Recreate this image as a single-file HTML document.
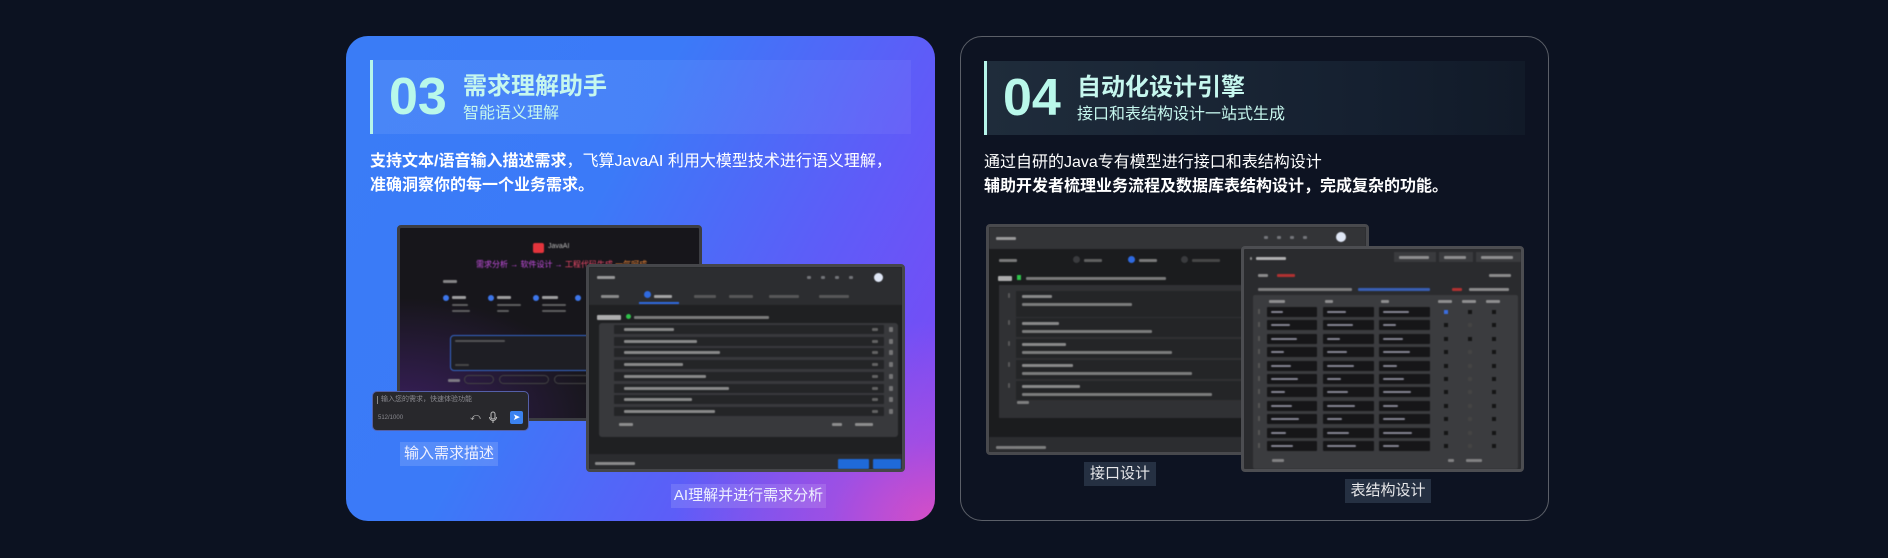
<!DOCTYPE html>
<html><head><meta charset="utf-8">
<style>
*{margin:0;padding:0;box-sizing:border-box}
html,body{width:1888px;height:558px;background:#0c1221;overflow:hidden;font-family:"Liberation Sans","Noto Sans CJK SC",sans-serif}
.abs{position:absolute}
.card{position:absolute;top:36px;width:589px;height:485px;border-radius:22px;overflow:hidden}
#c1{left:346px;background:radial-gradient(ellipse 260px 200px at 100% 100%,#d54ec6 0%,rgba(200,80,210,0.5) 40%,rgba(130,70,245,0) 100%),linear-gradient(118deg,#3a7cf6 0%,#3b7af8 40%,#5e5cf8 70%,#8145f5 100%)}
#c2{left:960px;background:#0d1322;border:1px solid #5b5f68}
.band{position:absolute;left:24px;top:24px;width:541px;height:74px;border-left:3px solid #b6f5ea}
#c1 .band{background:linear-gradient(90deg,rgba(255,255,255,0.08),rgba(255,255,255,0.05))}
#c2 .band{left:23px;background:linear-gradient(90deg,#1f2c3b,#152030 70%,#111a28)}
.num{position:absolute;left:16px;top:6px;font-size:52px;font-weight:bold;color:#b9f8ea;line-height:62px}
.tt{position:absolute;left:90px;top:13px;font-size:24px;font-weight:bold;color:#c6f7ee;line-height:28px;white-space:nowrap}
.st{position:absolute;left:90px;top:44px;font-size:16px;color:#c6f7ee;line-height:20px;white-space:nowrap}
.desc{position:absolute;left:24px;top:114px;font-size:16px;line-height:24px;color:#fff;white-space:nowrap}
.lbl{position:absolute;font-size:15px;color:#eef0ff;text-align:center;line-height:24px;white-space:nowrap}
.win{position:absolute;border:3px solid #444549;border-radius:4px;overflow:hidden}
.win>*{filter:blur(0.6px)}
.b{position:absolute;background:#8a8c91;height:3px;border-radius:1px;opacity:.75}
</style></head><body>

<div class="card" id="c1">
 <div class="band"><div class="num">03</div><div class="tt">需求理解助手</div><div class="st">智能语义理解</div></div>
 <div class="desc"><b>支持文本/语音输入描述需求</b>，飞算JavaAI 利用大模型技术进行语义理解，<br><b>准确洞察你的每一个业务需求。</b></div>
</div>

<div class="card" id="c2">
 <div class="band"><div class="num">04</div><div class="tt">自动化设计引擎</div><div class="st">接口和表结构设计一站式生成</div></div>
 <div class="desc" style="left:23px">通过自研的Java专有模型进行接口和表结构设计<br><b>辅助开发者梳理业务流程及数据库表结构设计，完成复杂的功能。</b></div>
</div>

<!-- left back window -->
<div class="win" style="left:397px;top:225px;width:305px;height:196px;background:radial-gradient(ellipse 200px 120px at 0% 100%,#3a1f5e 0%,rgba(40,25,60,0) 100%),#17161b;border-color:#3c3d42">
 <div class="abs" style="left:133px;top:15px;width:11px;height:10px;background:#e4343c;border-radius:2px"></div>
 <div class="abs" style="left:148px;top:15px;font-size:7px;color:#bbb">JavaAI</div>
 <div class="abs" style="left:76px;top:31px;font-size:8px;color:#c54fe0;white-space:nowrap">需求分析 → 软件设计 → <span style="color:#ee4a6a">工程代码生成</span> <span style="color:#f08a3a">一气呵成</span></div>
 <div class="b" style="left:43px;top:52px;width:14px;background:#aaa"></div>
 <div class="abs" style="left:43px;top:67px;width:6px;height:6px;border-radius:50%;background:#3d76ea"></div>
 <div class="b" style="left:52px;top:68px;width:14px;background:#ccc"></div>
 <div class="b" style="left:52px;top:76px;width:16px;background:#777;height:2px"></div>
 <div class="b" style="left:52px;top:82px;width:18px;background:#777;height:2px"></div>
 <div class="abs" style="left:88px;top:67px;width:6px;height:6px;border-radius:50%;background:#3d76ea"></div>
 <div class="b" style="left:97px;top:68px;width:14px;background:#ccc"></div>
 <div class="b" style="left:97px;top:76px;width:24px;background:#777;height:2px"></div>
 <div class="b" style="left:97px;top:82px;width:12px;background:#777;height:2px"></div>
 <div class="abs" style="left:133px;top:67px;width:6px;height:6px;border-radius:50%;background:#3d76ea"></div>
 <div class="b" style="left:142px;top:68px;width:16px;background:#ccc"></div>
 <div class="b" style="left:142px;top:76px;width:24px;background:#777;height:2px"></div>
 <div class="b" style="left:142px;top:82px;width:24px;background:#777;height:2px"></div>
 <div class="abs" style="left:175px;top:67px;width:6px;height:6px;border-radius:50%;background:#3d76ea"></div>
 <div class="abs" style="left:50px;top:107px;width:260px;height:36px;border:1px solid #3566c8;border-radius:4px;background:#1e1e24"></div>
 <div class="b" style="left:55px;top:112px;width:50px;background:#666;height:2px"></div>
 <div class="b" style="left:55px;top:136px;width:14px;background:#555;height:2px"></div>
 <div class="b" style="left:48px;top:151px;width:12px;background:#999"></div>
 <div class="abs" style="left:64px;top:147px;width:30px;height:9px;border:1px solid #444;border-radius:5px"></div>
 <div class="abs" style="left:99px;top:147px;width:50px;height:9px;border:1px solid #444;border-radius:5px"></div>
 <div class="abs" style="left:154px;top:147px;width:40px;height:9px;border:1px solid #444;border-radius:5px"></div>
</div>

<!-- left front window -->
<div class="win" style="left:586px;top:264px;width:319px;height:208px;background:#1f2022;border-color:#45464a">
 <div class="abs" style="left:0;top:0;width:100%;height:38px;background:#2c2d30"></div>
 <div class="b" style="left:8px;top:9px;width:18px;background:#bbb"></div>
 <div class="b" style="left:218px;top:9px;width:4px"></div><div class="b" style="left:232px;top:9px;width:4px"></div><div class="b" style="left:246px;top:9px;width:4px"></div><div class="b" style="left:260px;top:9px;width:4px"></div>
 <div class="abs" style="left:285px;top:6px;width:9px;height:9px;border-radius:50%;background:#dfe6f5"></div>
 <div class="b" style="left:12px;top:28px;width:18px;background:#aaa"></div>
 <div class="abs" style="left:55px;top:24px;width:7px;height:7px;border-radius:50%;background:#2f6ae0"></div>
 <div class="b" style="left:65px;top:28px;width:18px;background:#ccc"></div>
 <div class="abs" style="left:50px;top:35px;width:40px;height:2px;background:#2f6ae0"></div>
 <div class="b" style="left:105px;top:28px;width:22px;background:#666"></div>
 <div class="b" style="left:140px;top:28px;width:24px;background:#666"></div>
 <div class="b" style="left:180px;top:28px;width:30px;background:#666"></div>
 <div class="b" style="left:230px;top:28px;width:30px;background:#666"></div>
 <div class="b" style="left:8px;top:48px;width:24px;background:#ddd;height:5px"></div>
 <div class="abs" style="left:37px;top:47px;width:5px;height:5px;border-radius:50%;background:#2ec24a"></div>
 <div class="b" style="left:45px;top:49px;width:135px;background:#999"></div>
 <div class="abs" style="left:10px;top:56px;width:299px;height:114px;background:#38393c;border-radius:3px"></div>
 <div id="lrows"></div>
 <div class="b" style="left:30px;top:156px;width:14px;background:#aaa"></div>
 <div class="b" style="left:243px;top:156px;width:10px;background:#aaa"></div>
 <div class="b" style="left:266px;top:156px;width:18px;background:#aaa"></div>
 <div class="abs" style="left:0;top:187px;width:100%;height:21px;background:#2b2c2f"></div>
 <div class="b" style="left:6px;top:195px;width:40px;background:#aaa"></div>
 <div class="abs" style="left:249px;top:192px;width:31px;height:10px;background:#1f6ad8;border-radius:1px"></div>
 <div class="abs" style="left:284px;top:192px;width:28px;height:10px;background:#1f6ad8;border-radius:1px"></div>
</div>

<!-- input box -->
<div class="abs" style="left:372px;top:391px;width:157px;height:40px;background:#28282c;border:1px solid #5460a8;border-radius:5px">
 <div class="abs" style="left:4px;top:4px;width:1px;height:8px;background:#888"></div>
 <div class="abs" style="left:8px;top:2px;font-size:7px;color:#8a8a90;white-space:nowrap">输入您的需求，快速体验功能</div>
 <div class="abs" style="left:5px;top:23px;font-size:6px;color:#8a8a90">512/1000</div>
 <div class="abs" style="left:97px;top:20px;font-size:10px;color:#bbb">⤺</div>
 <svg class="abs" style="left:115px;top:19px" width="10" height="13" viewBox="0 0 10 13"><rect x="3" y="1" width="4" height="7" rx="2" fill="none" stroke="#bbb" stroke-width="1"/><path d="M1.5 6a3.5 3.5 0 0 0 7 0M5 9.5V12" fill="none" stroke="#bbb" stroke-width="1"/></svg>
 <div class="abs" style="left:137px;top:19px;width:13px;height:13px;background:#3b82f0;border-radius:2px;color:#fff;font-size:9px;text-align:center;line-height:13px">➤</div>
</div>

<div class="lbl" style="left:400px;top:442px;width:98px;background:rgba(255,255,255,0.14)">输入需求描述</div>
<div class="lbl" style="left:671px;top:484px;width:155px;background:rgba(255,255,255,0.12)">AI理解并进行需求分析</div>

<!-- right back window -->
<div class="win" style="left:986px;top:224px;width:383px;height:231px;background:#1b1c1e;border-color:#48494d">
 <div class="abs" style="left:0;top:0;width:100%;height:22px;background:#333437"></div>
 <div class="b" style="left:7px;top:10px;width:20px;background:#bbb"></div>
 <div class="b" style="left:275px;top:9px;width:4px"></div><div class="b" style="left:288px;top:9px;width:4px"></div><div class="b" style="left:301px;top:9px;width:4px"></div><div class="b" style="left:314px;top:9px;width:4px"></div>
 <div class="abs" style="left:347px;top:5px;width:10px;height:10px;border-radius:50%;background:#dfe6f5"></div>
 <div class="b" style="left:10px;top:32px;width:18px;background:#999"></div>
 <div class="abs" style="left:84px;top:29px;width:7px;height:7px;border-radius:50%;background:#3a3b3e"></div><div class="b" style="left:95px;top:32px;width:18px;background:#777"></div>
 <div class="abs" style="left:139px;top:29px;width:7px;height:7px;border-radius:50%;background:#2f6ae0"></div><div class="b" style="left:150px;top:32px;width:18px;background:#999"></div>
 <div class="abs" style="left:192px;top:29px;width:7px;height:7px;border-radius:50%;background:#3a3b3e"></div><div class="b" style="left:203px;top:32px;width:28px;background:#555"></div>
 <div class="b" style="left:9px;top:49px;width:14px;background:#ddd;height:5px"></div>
 <div class="abs" style="left:28px;top:48px;width:4px;height:5px;background:#2ec24a"></div>
 <div class="b" style="left:37px;top:50px;width:140px;background:#999"></div>
 <div class="abs" style="left:10px;top:58px;width:380px;height:133px;background:#303134"></div>
 <div id="rgroups"></div>
 <div class="b" style="left:28px;top:174px;width:12px;background:#999"></div>
 <div class="abs" style="left:0;top:210px;width:100%;height:21px;background:#2c2d30"></div>
 <div class="b" style="left:7px;top:219px;width:50px;background:#999"></div>
</div>

<!-- right front window -->
<div class="win" style="left:1241px;top:246px;width:283px;height:226px;background:#2a2b2e;border-color:#4c4d51">
 <div class="b" style="left:6px;top:8px;width:2px;background:#aaa"></div>
 <div class="b" style="left:12px;top:8px;width:30px;background:#ddd"></div>
 <div class="abs" style="left:150px;top:3px;width:42px;height:10px;background:#3a3b3e"></div>
 <div class="abs" style="left:195px;top:3px;width:34px;height:10px;background:#3a3b3e"></div>
 <div class="abs" style="left:232px;top:3px;width:45px;height:10px;background:#3a3b3e"></div>
 <div class="b" style="left:155px;top:7px;width:30px;background:#aaa"></div>
 <div class="b" style="left:200px;top:7px;width:22px;background:#aaa"></div>
 <div class="b" style="left:237px;top:7px;width:32px;background:#aaa"></div>
 <div class="b" style="left:14px;top:25px;width:10px;background:#aaa"></div>
 <div class="b" style="left:33px;top:25px;width:18px;background:#d33"></div>
 <div class="b" style="left:245px;top:25px;width:22px;background:#aaa"></div>
 <div class="b" style="left:14px;top:39px;width:94px;background:#999"></div>
 <div class="b" style="left:114px;top:39px;width:72px;background:#3d6fe0"></div>
 <div class="b" style="left:208px;top:39px;width:10px;background:#d33"></div>
 <div class="b" style="left:225px;top:39px;width:40px;background:#aaa"></div>
 <div class="abs" style="left:9px;top:46px;width:265px;height:174px;background:#3b3c3f;border-radius:2px"></div>
 <div class="b" style="left:25px;top:51px;width:16px;background:#aaa"></div>
 <div class="b" style="left:81px;top:51px;width:8px;background:#aaa"></div>
 <div class="b" style="left:137px;top:51px;width:8px;background:#aaa"></div>
 <div class="b" style="left:194px;top:51px;width:14px;background:#aaa"></div>
 <div class="b" style="left:218px;top:51px;width:14px;background:#aaa"></div>
 <div class="b" style="left:242px;top:51px;width:14px;background:#aaa"></div>
 <div id="trows"></div>
 <div class="b" style="left:28px;top:210px;width:12px;background:#999"></div>
 <div class="b" style="left:204px;top:210px;width:6px;background:#999"></div>
 <div class="b" style="left:222px;top:210px;width:16px;background:#999"></div>
</div>

<div class="lbl" style="left:1084px;top:462px;width:72px;background:#253042;color:#e8e8ea">接口设计</div>
<div class="lbl" style="left:1345px;top:479px;width:86px;background:#253042;color:#e8e8ea">表结构设计</div>

<script>
var h='';
for(var i=0;i<8;i++){var y=58+i*11.7;
h+='<div class="abs" style="left:25px;top:'+y+'px;width:270px;height:9px;background:#242527;border-radius:1px;filter:blur(0.6px)"></div>';
h+='<div class="b" style="left:35px;top:'+(y+3)+'px;width:'+(50+(i*23)%60)+'px;background:#aaa;filter:blur(0.6px)"></div>';
h+='<div class="b" style="left:283px;top:'+(y+3)+'px;width:6px;background:#777;filter:blur(0.6px)"></div>';
h+='<div class="b" style="left:300px;top:'+(y+2)+'px;width:4px;height:5px;background:#888;filter:blur(0.6px)"></div>';}
document.getElementById('lrows').outerHTML=h;
h='';
var gs=[[64,26],[91,19],[112,19],[133,19],[154,19]];
for(var i=0;i<gs.length;i++){var g=gs[i];
h+='<div class="abs" style="left:27px;top:'+g[0]+'px;width:360px;height:'+g[1]+'px;background:#242527;filter:blur(0.6px)"></div>';
h+='<div class="b" style="left:33px;top:'+(g[0]+4)+'px;width:'+(30+i*7)+'px;background:#aaa;filter:blur(0.6px)"></div>';
h+='<div class="b" style="left:33px;top:'+(g[0]+12)+'px;width:'+(110+i*20)+'px;background:#999;filter:blur(0.6px)"></div>';
h+='<div class="b" style="left:19px;top:'+(g[0]+2)+'px;width:2px;height:5px;background:#666"></div>';}
document.getElementById('rgroups').outerHTML=h;
h='';
for(var i=0;i<11;i++){var y=58+i*13.4;
[[23,50],[79,51],[135,51]].forEach(function(c,k){
h+='<div class="abs" style="left:'+c[0]+'px;top:'+y+'px;width:'+c[1]+'px;height:10px;background:#161618;border-radius:1px;filter:blur(0.5px)"></div>';
h+='<div class="b" style="left:'+(c[0]+4)+'px;top:'+(y+4)+'px;width:'+(12+((i+k)*7)%20)+'px;height:2px;background:#aab;filter:blur(0.6px)"></div>';});
h+='<div class="abs" style="left:200px;top:'+(y+3)+'px;width:4px;height:4px;background:'+(i==0?'#3a6de0':'#151515')+'"></div>';
h+='<div class="abs" style="left:224px;top:'+(y+3)+'px;width:4px;height:4px;background:'+(i==0||i==2?'#151515':'#444')+'"></div>';
h+='<div class="abs" style="left:248px;top:'+(y+3)+'px;width:4px;height:4px;background:#151515"></div>';
h+='<div class="abs" style="left:14px;top:'+(y+2)+'px;width:2px;height:5px;background:#555"></div>';}
document.getElementById('trows').outerHTML=h;
</script>
</body></html>
